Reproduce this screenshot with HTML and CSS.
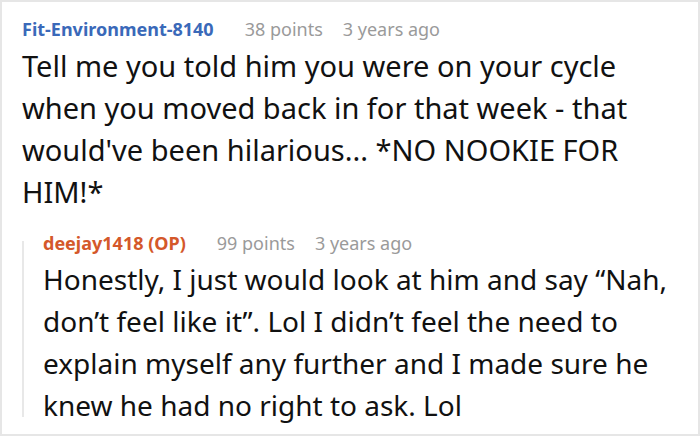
FILE: index.html
```html
<!DOCTYPE html>
<html>
<head>
<meta charset="utf-8">
<link rel="stylesheet" href="styles.css">
</head>
<body>
<div class="frame">
  <div class="comment">
    <div class="meta">
      <span class="user user-blue">Fit-Environment-8140</span>
      <span class="info">38 points</span>
      <span class="info">3 years ago</span>
    </div>
    <div class="text">Tell me you told him you were on your cycle when you moved back in for that week - that would've been hilarious... *NO NOOKIE FOR HIM!*</div>
    <div class="reply">
      <div class="meta">
        <span class="user user-orange">deejay1418 (OP)</span>
        <span class="info">99 points</span>
        <span class="info">3 years ago</span>
      </div>
      <div class="text text-reply">Honestly, I just would look at him and say “Nah, don’t feel like it”. Lol I didn’t feel the need to explain myself any further and I made sure he knew he had no right to ask. Lol</div>
    </div>
  </div>
</div>
</body>
</html>
```
FILE: styles.css
```css
html, body {
  margin: 0;
  padding: 0;
  background: #ffffff;
}
.frame {
  box-sizing: border-box;
  width: 700px;
  height: 436px;
  border: 2px solid #e6e6e6;
  overflow: hidden;
  font-family: "Noto Sans", "Open Sans", sans-serif;
}
.comment {
  padding: 15px 28px 0 20px;
}
.meta {
  font-size: 18px;
  line-height: 24px;
  display: flex;
}
.user {
  font-weight: 700;
  margin-right: 31px;
}
.user-blue { color: #3a69b9; }
.user-orange { color: #d4582a; }
.info {
  color: #9a9a9a;
  margin-right: 20px;
}
.text {
  margin-top: 4px;
  font-size: 29px;
  line-height: 42px;
  color: #111111;
}
.text-reply {
  margin-top: 3px;
  font-size: 28px;
}
.reply {
  position: relative;
  margin-top: 18px;
  padding-left: 21px;
}
.reply::before {
  content: "";
  position: absolute;
  left: 0;
  top: 10px;
  bottom: 9px;
  width: 2px;
  background: #e8e8e8;
}
```
